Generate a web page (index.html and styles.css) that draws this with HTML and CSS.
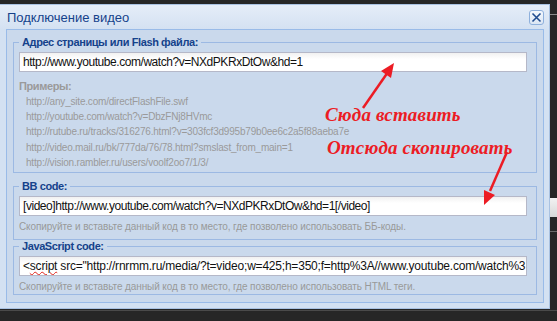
FILE: index.html
```html
<!DOCTYPE html>
<html lang="ru">
<head>
    <meta charset="UTF-8">
    <title>Подключение видео</title>
    <link rel="stylesheet" href="styles.css">
</head>
<body>
    <div class="screen">
        <div class="window">
            <div class="window-header">
                <span class="window-title">Подключение видео</span>
                <span class="close-btn">
                    <svg width="11" height="11" viewBox="0 0 11 11">
                        <path d="M1.5 1.5 L9.5 9.5 M9.5 1.5 L1.5 9.5" stroke="#1f4b8f" stroke-width="1.6" fill="none"/>
                    </svg>
                </span>
            </div>
            <div class="window-body">
                <fieldset class="group group-url">
                    <legend>Адрес страницы или Flash файла:</legend>
                    <div class="field">http://www.youtube.com/watch?v=NXdPKRxDtOw&amp;hd=1</div>
                    <div class="examples-title">Примеры:</div>
                    <div class="examples">
                        <div>http://any_site.com/directFlashFile.swf</div>
                        <div>http://youtube.com/watch?v=DbzFNj8HVmc</div>
                        <div>http://rutube.ru/tracks/316276.html?v=303fcf3d995b79b0ee6c2a5f88aeba7e</div>
                        <div>http://video.mail.ru/bk/777da/76/78.html?smslast_from_main=1</div>
                        <div>http://vision.rambler.ru/users/voolf2oo7/1/3/</div>
                    </div>
                </fieldset>
                <fieldset class="group group-bb">
                    <legend>BB code:</legend>
                    <div class="field">[video]http://www.youtube.com/watch?v=NXdPKRxDtOw&amp;hd=1[/video]</div>
                    <div class="hint">Скопируйте и вставьте данный код в то место, где позволено использовать ББ-коды.</div>
                </fieldset>
                <fieldset class="group group-js">
                    <legend>JavaScript code:</legend>
                    <div class="field field-js">&lt;<span class="typo">script</span> src="http://rnrmm.ru/media/?t=video;w=425;h=350;f=http%3A//www.youtube.com/watch%3</div>
                    <div class="hint">Скопируйте и вставьте данный код в то место, где позволено использовать HTML теги.</div>
                </fieldset>
            </div>
        </div>
        <div class="side">
            <div class="side-line"></div>
            <div class="side-block"></div>
            <div class="side-line side-line-low"></div>
        </div>
    </div>
    <div class="bottom-bar"></div>

    <!-- red annotations drawn over the dialog -->
    <svg class="arrows" width="557" height="321" viewBox="0 0 557 321">
        <line x1="363" y1="108" x2="388" y2="72" stroke="#ec1c24" stroke-width="2.5"/>
        <polygon points="394,63 391,78 381,71" fill="#ec1c24"/>
        <line x1="507" y1="152" x2="490" y2="191" stroke="#ec1c24" stroke-width="2.5"/>
        <polygon points="484,205 484,190 495,195" fill="#ec1c24"/>
    </svg>
    <span class="note note-paste">Сюда вставить</span>
    <span class="note note-copy">Отсюда скопировать</span>
</body>
</html>
```

FILE: styles.css
```css
body {
    margin: 0;
    width: 557px;
    height: 321px;
    overflow: hidden;
    background: #262626;
    font-family: "Liberation Sans", Arial, sans-serif;
    position: relative;
}
.screen {
    display: flex;
    padding-top: 4px;
}
.window {
    width: 549px;
    flex: none;
    margin-left: -1px;
    border: 1px solid #a9c2e2;
    background: #d3e1f2;
    padding-bottom: 5px;
}
.window-header {
    height: 24px;
    display: flex;
    align-items: center;
    justify-content: space-between;
    padding: 0 5px 0 7px;
    background: linear-gradient(#e5edf8, #d4e1f2);
}
.window-title {
    color: #15428b;
    font-size: 13px;
}
.close-btn {
    width: 13px;
    height: 13px;
    border: 1px solid #8eb0dc;
    border-radius: 3px;
    background: linear-gradient(#f4f8fd, #dbe6f4);
    display: flex;
    align-items: center;
    justify-content: center;
    margin-top: 1px;
}
.window-body {
    width: 538px;
    margin-left: 6px;
    border: 1px solid #99bbe8;
    background: #cad9ec;
    padding: 0 6px 7px 6px;
    box-sizing: border-box;
}
.group {
    margin: 0;
    min-width: 0;
    border: 1px solid #9cb9e3;
    padding: 0 9px 0 5px;
}
.group legend {
    color: #15428b;
    font-weight: bold;
    font-size: 11px;
    letter-spacing: -0.4px;
    line-height: 13px;
    padding: 0 3px;
}
.group-url {
    margin-top: 6px;
    padding-bottom: 2px;
}
.group-bb {
    margin-top: 7px;
    padding-bottom: 6px;
}
.group-js {
    padding-bottom: 1px;
}
.field {
    margin-top: 3px;
    height: 20px;
    box-sizing: border-box;
    border: 1px solid #b5b8c8;
    background: linear-gradient(#f1f1f1, #ffffff 6px);
    padding: 0 3px;
    font-size: 12px;
    letter-spacing: -0.45px;
    line-height: 18px;
    color: #111;
    white-space: nowrap;
    overflow: hidden;
}
.field-js {
    letter-spacing: -0.21px;
}
.typo {
    text-decoration: underline wavy #e0241b;
    text-decoration-thickness: 1px;
}
.examples-title {
    margin-top: 7px;
    color: #9a9a9a;
    font-weight: bold;
    font-size: 11px;
    letter-spacing: -0.4px;
    line-height: 15px;
}
.examples {
    padding-left: 7px;
    color: #9a9a9a;
    font-size: 10px;
    letter-spacing: -0.2px;
    line-height: 15.2px;
}
.hint {
    margin-top: 4px;
    color: #999999;
    font-size: 10px;
    letter-spacing: -0.1px;
    line-height: 13px;
    white-space: nowrap;
}
.side {
    flex: 1;
    padding-top: 10px;
}
.side-line {
    height: 1px;
    background: #8a8a8a;
}
.side-block {
    margin-top: 183px;
    height: 19px;
    background: linear-gradient(#f2f2f2, #d8d8d8);
}
.side-line-low {
    margin-top: 14px;
    background: #6a6a6a;
}
.bottom-bar {
    margin-top: 1px;
    height: 1px;
    background: #4a4a4a;
}
.arrows {
    position: absolute;
    top: 0;
    left: 0;
    pointer-events: none;
}
.note {
    position: absolute;
    color: #ec1c24;
    font-family: "Liberation Serif", "Times New Roman", serif;
    font-weight: bold;
    font-style: italic;
    font-size: 19px;
    letter-spacing: 0.15px;
    line-height: 19px;
    white-space: nowrap;
}
.note-paste {
    top: 105px;
    left: 325px;
}
.note-copy {
    top: 138px;
    left: 327px;
}
```
